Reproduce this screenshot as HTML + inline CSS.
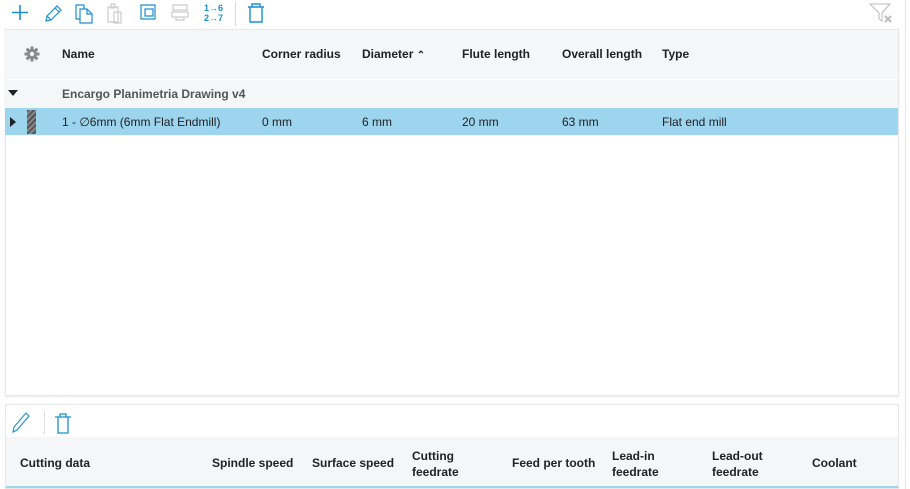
<!DOCTYPE html>
<html><head><style>
*{box-sizing:border-box;margin:0;padding:0}
body{width:910px;height:489px;background:#fff;font-family:"Liberation Sans",sans-serif;font-size:12px;color:#222;position:relative;overflow:hidden}
.abs{position:absolute}
.b{font-weight:bold}
.t{position:absolute;white-space:nowrap}
</style></head><body>
<!-- top toolbar -->
<svg class="abs" style="left:0px;top:0px" width="280" height="28" fill="none" stroke-width="1.2">
 <path d="M20 5v15M12 12.5h16" stroke="#1a8fd0" stroke-width="1.6"/>
 <path d="M46 21l1-5 10-10 4 4-10 10z M55 8l4 4 M47 16l4 4" stroke="#1a8fd0"/>
 <path d="M80 9h7l5 5v9h-12z M87 9v5h5" stroke="#1a8fd0"/>
 <path d="M84 9v-4h-8v14h4" stroke="#1a8fd0"/>
 <path d="M108 7h10v15h-10z M111 4h4v4h-4z M114 12h7v11h-7z" stroke="#ccc"/>
 <path d="M141 5h14v14h-14z M145 9h8v7h-8z" stroke="#1a8fd0"/>
 <path d="M173 5h14v5h-14z M172 12h16v5h-16z M176 17v3h8v-3" stroke="#ccc"/>
 <text x="204" y="11" font-size="9" fill="#1a8fd0" stroke="none" font-family="Liberation Sans" font-weight="bold">1→6</text>
 <text x="204" y="21" font-size="9" fill="#1a8fd0" stroke="none" font-family="Liberation Sans" font-weight="bold">2→7</text>
 <path d="M235.5 2v24" stroke="#ddd"/>
 <path d="M248 7h16M252 7v-3h8v3M250 7v15h12v-15" stroke="#1a8fd0" stroke-width="1.4"/>
</svg>
<svg class="abs" style="left:868px;top:2px" width="28" height="22" fill="none" stroke="#bbb" stroke-width="1"><path d="M2 2h20l-8 9v8l-3-2v-6z"/><path d="M17 14l6 6M23 14l-6 6" stroke-width="2"/></svg>
<div class="abs" style="left:905px;top:0;width:1px;height:489px;background:#e6e6e6"></div>

<!-- main panel -->
<div class="abs" style="left:5px;top:28px;width:894px;height:368px;border:1px solid #e6e8ec;border-top:none;box-shadow:0 1px 2px #e8e8e8"></div>
<div class="abs" style="left:5px;top:29px;width:893px;height:50px;background:#f5f6f8;border-top:1px solid #e6e8ec"></div>
<svg class="abs" style="left:24px;top:46px" width="16" height="16" viewBox="0 0 16 16"><g fill="#888"><circle cx="8" cy="8" r="5"/><rect x="6.5" y="0.5" width="3" height="15"/><rect x="0.5" y="6.5" width="15" height="3"/><rect x="6.5" y="0.5" width="3" height="15" transform="rotate(45 8 8)"/><rect x="6.5" y="0.5" width="3" height="15" transform="rotate(-45 8 8)"/></g><circle cx="8" cy="8" r="2.2" fill="#f5f6f8"/></svg>
<div class="t b" style="left:62px;top:47px">Name</div>
<div class="t b" style="left:262px;top:47px">Corner radius</div>
<div class="t b" style="left:362px;top:47px">Diameter <span style="font-size:10px">&#8963;</span></div>
<div class="t b" style="left:462px;top:47px">Flute length</div>
<div class="t b" style="left:562px;top:47px">Overall length</div>
<div class="t b" style="left:662px;top:47px">Type</div>

<div class="abs" style="left:5px;top:80px;width:893px;height:28px;background:#f5f6f8"></div>
<svg class="abs" style="left:8px;top:90px" width="10" height="7"><path d="M0 0h10l-5 6z" fill="#222"/></svg>
<div class="t b" style="left:62px;top:87px;color:#555">Encargo Planimetria Drawing v4</div>

<div class="abs" style="left:5px;top:108px;width:893px;height:27px;background:#9dd5ee"></div>
<svg class="abs" style="left:10px;top:117px" width="7" height="10"><path d="M0 0v10l6-5z" fill="#222"/></svg>
<div class="abs" style="left:27px;top:110px;width:9px;height:24px;background:repeating-linear-gradient(135deg,#555 0 2px,#888 2px 4px);"></div>
<div class="t" style="left:62px;top:115px">1 - ∅6mm (6mm Flat Endmill)</div>
<div class="t" style="left:262px;top:115px">0 mm</div>
<div class="t" style="left:362px;top:115px">6 mm</div>
<div class="t" style="left:462px;top:115px">20 mm</div>
<div class="t" style="left:562px;top:115px">63 mm</div>
<div class="t" style="left:662px;top:115px">Flat end mill</div>

<!-- bottom panel -->
<div class="abs" style="left:5px;top:404px;width:894px;height:85px;border:1px solid #e6e8ec"></div>
<svg class="abs" style="left:10px;top:408px" width="64" height="28" fill="none" stroke="#1a8fd0" stroke-width="1.1"><path d="M3 24l1-5 12-14 3 3-12 14z"/><path d="M34.5 3v23" stroke="#ddd"/><path d="M45 9h16M48 9v16h10v-16M50 9v-3h6v3" stroke-width="1.3" transform="translate(0 0)"/></svg>
<div class="abs" style="left:6px;top:437px;width:892px;height:51px;background:#f5f6f8;border-bottom:2px solid #9dd5ee"></div>
<div class="t b" style="left:20px;top:456px">Cutting data</div>
<div class="t b" style="left:212px;top:456px">Spindle speed</div>
<div class="t b" style="left:312px;top:456px">Surface speed</div>
<div class="t b" style="left:412px;top:448px;line-height:16px">Cutting<br>feedrate</div>
<div class="t b" style="left:512px;top:456px">Feed per tooth</div>
<div class="t b" style="left:612px;top:448px;line-height:16px">Lead-in<br>feedrate</div>
<div class="t b" style="left:712px;top:448px;line-height:16px">Lead-out<br>feedrate</div>
<div class="t b" style="left:812px;top:456px">Coolant</div>
</body></html>
